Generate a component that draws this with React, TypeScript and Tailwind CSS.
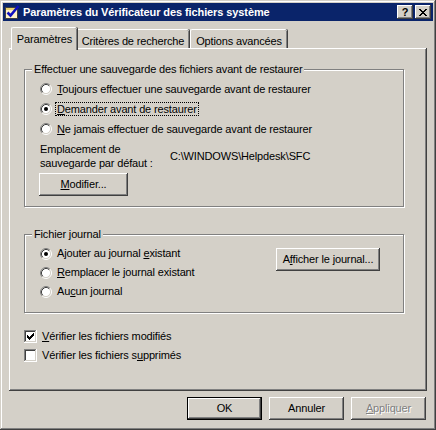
import type { ReactNode } from 'react';

const raised =
  'shadow-[inset_-1px_-1px_#404040,inset_1px_1px_#ffffff,inset_-2px_-2px_#808080,inset_2px_2px_#d4d0c8]';

const etched =
  'border border-[#808080] shadow-[inset_1px_1px_#ffffff,1px_1px_#ffffff]';

function Radio({ checked }: { checked?: boolean }) {
  return (
    <svg width="12" height="12" viewBox="0 0 12 12" className="shrink-0">
      <circle cx="6" cy="6" r="4.5" fill="#ffffff" />
      <path d="M2.11 9.89 A5.5 5.5 0 0 1 9.89 2.11" fill="none" stroke="#808080" />
      <path d="M9.89 2.11 A5.5 5.5 0 0 1 2.11 9.89" fill="none" stroke="#ffffff" />
      <path d="M2.82 9.18 A4.5 4.5 0 0 1 9.18 2.82" fill="none" stroke="#404040" />
      <path d="M9.18 2.82 A4.5 4.5 0 0 1 2.82 9.18" fill="none" stroke="#d4d0c8" />
      {checked && <circle cx="6" cy="6" r="2" fill="#000000" />}
    </svg>
  );
}

function Check({ checked }: { checked?: boolean }) {
  // pixel check mark, columns 3 px tall
  const cols: [number, number][] = [
    [3, 5], [4, 6], [5, 7], [6, 6], [7, 5], [8, 4], [9, 3],
  ];
  return (
    <svg width="13" height="13" viewBox="0 0 13 13" className="shrink-0" shapeRendering="crispEdges">
      <rect x="0" y="0" width="13" height="13" fill="#ffffff" />
      <rect x="0" y="0" width="12" height="1" fill="#808080" />
      <rect x="0" y="0" width="1" height="12" fill="#808080" />
      <rect x="1" y="1" width="10" height="1" fill="#404040" />
      <rect x="1" y="1" width="1" height="10" fill="#404040" />
      <rect x="1" y="11" width="11" height="1" fill="#d4d0c8" />
      <rect x="11" y="1" width="1" height="11" fill="#d4d0c8" />
      {checked &&
        cols.map(([x, y]) => <rect key={x} x={x} y={y} width="1" height="3" fill="#000000" />)}
    </svg>
  );
}

function RadioRow({ checked, children, h }: { checked?: boolean; children: ReactNode; h: string }) {
  return (
    <label className={'flex items-center gap-[5px] ' + h}>
      <Radio checked={checked} />
      <span>{children}</span>
    </label>
  );
}

function Btn({ children, className = '' }: { children: ReactNode; className?: string }) {
  return (
    <button type="button" className={'flex items-center justify-center bg-[#d4d0c8] ' + raised + ' ' + className}>
      {children}
    </button>
  );
}

function TitleIcon() {
  return (
    <svg width="16" height="16" viewBox="0 0 16 16" shapeRendering="crispEdges">
      <rect x="1.5" y="3.5" width="12" height="11" fill="#fff4c8" stroke="#404040" />
      <rect x="2" y="4" width="11" height="2" fill="#e8d070" />
      <path d="M3.5 8.5 L6.5 11.5 L14.5 2" fill="none" stroke="#1010c0" strokeWidth="2.6" shapeRendering="auto" />
    </svg>
  );
}

export default function App() {
  return (
    <div className="w-[436px] h-[430px] overflow-hidden bg-[#d4d0c8] p-[3px] flex flex-col font-['Liberation_Sans',Arial,sans-serif] text-[11px] tracking-[-0.15px] text-black shadow-[inset_-1px_-1px_#404040,inset_1px_1px_#d4d0c8,inset_-2px_-2px_#808080,inset_2px_2px_#ffffff]">
      {/* title bar */}
      <div className="h-[18px] bg-[#0a246a] flex items-center pl-[1px] pr-[2px]">
        <TitleIcon />
        <span className="ml-[3px] text-white font-bold text-[11px] tracking-[-0.1px] leading-none">
          Paramètres du Vérificateur des fichiers système
        </span>
        <div className="ml-auto flex gap-[2px]">
          <div className={'w-[16px] h-[14px] bg-[#d4d0c8] flex items-center justify-center font-bold text-[11px] leading-none ' + raised}>
            ?
          </div>
          <div className={'w-[16px] h-[14px] bg-[#d4d0c8] flex items-center justify-center ' + raised}>
            <svg width="8" height="7" viewBox="0 0 8 7" shapeRendering="crispEdges">
              <path d="M0 0h2v1h-2zM6 0h2v1h-2zM1 1h2v1h-2zM5 1h2v1h-2zM2 2h4v1h-4zM3 3h2v1h-2zM2 4h4v1h-4zM1 5h2v1h-2zM5 5h2v1h-2zM0 6h2v1h-2zM6 6h2v1h-2z" fill="#000" />
            </svg>
          </div>
        </div>
      </div>

      <div className="flex-1 px-[6px] pt-[6px]">
        {/* tabs */}
        <div className="flex items-start h-[21px] pl-[2px]">
          <div className="relative z-10 h-[23px] w-[66px] bg-[#d4d0c8] border-l border-t border-white rounded-tl-[2px] rounded-tr-[2px] shadow-[inset_-1px_0_#808080,1px_0_#404040] flex justify-center pt-[3px]">
            Paramètres
          </div>
          <div className="mt-[2px] h-[19px] w-[112px] bg-[#d4d0c8] border-t border-white rounded-tr-[2px] shadow-[inset_-1px_0_#808080,1px_0_#404040] flex justify-center pt-[3px]">
            Critères de recherche
          </div>
          <div className="mt-[2px] ml-[1px] h-[19px] w-[97px] bg-[#d4d0c8] border-l border-t border-white rounded-tl-[2px] rounded-tr-[2px] shadow-[inset_-1px_0_#808080,1px_0_#404040] flex justify-center pt-[3px]">
            Options avancées
          </div>
        </div>

        {/* panel */}
        <div className={'h-[343px] pt-[14px] pl-[15px] ' + raised}>
          <fieldset className={'w-[380px] ' + etched}>
            <legend className="ml-[7px] px-[2px] leading-[14px] bg-[#d4d0c8]">
              Effectuer une sauvegarde des fichiers avant de restaurer
            </legend>
            <div className="pl-[15px] pt-[3px] pb-[10px]">
              <RadioRow h="h-[20px]">
                <span className="underline">T</span>oujours effectuer une sauvegarde avant de restaurer
              </RadioRow>
              <RadioRow h="h-[20px]" checked>
                <span className="-ml-[2px] px-[1px] border border-dotted border-black leading-[13px]">
                  <span className="underline">D</span>emander avant de restaurer
                </span>
              </RadioRow>
              <RadioRow h="h-[20px]">
                <span className="underline">N</span>e jamais effectuer de sauvegarde avant de restaurer
              </RadioRow>
              <div className="mt-[3px] flex items-center leading-[14px]">
                <div className="w-[130px]">
                  Emplacement de
                  <br />
                  sauvegarde par défaut :
                </div>
                <div>C:\WINDOWS\Helpdesk\SFC</div>
              </div>
              <Btn className="mt-[3px] -ml-[1px] w-[89px] h-[23px]">
                <span>
                  <span className="underline">M</span>odifier...
                </span>
              </Btn>
            </div>
          </fieldset>

          <fieldset className={'mt-[20px] w-[380px] ' + etched}>
            <legend className="ml-[7px] px-[2px] leading-[14px] bg-[#d4d0c8]">Fichier journal</legend>
            <div className="flex items-start pl-[15px] pr-[23px] pb-[11px]">
              <div className="pt-[3px]">
                <RadioRow h="h-[19px]" checked>
                  Ajouter au journal <span className="underline">e</span>xistant
                </RadioRow>
                <RadioRow h="h-[19px]">
                  <span className="underline">R</span>emplacer le journal existant
                </RadioRow>
                <RadioRow h="h-[19px]">
                  Au<span className="underline">c</span>un journal
                </RadioRow>
              </div>
              <Btn className="ml-auto mt-[7px] w-[104px] h-[23px]">
                <span>
                  A<span className="underline">f</span>ficher le journal...
                </span>
              </Btn>
            </div>
          </fieldset>

          <div className="mt-[14px]">
            <label className="flex items-center gap-[5px] h-[19px]">
              <Check checked />
              <span>
                <span className="underline">V</span>érifier les fichiers modifiés
              </span>
            </label>
            <label className="flex items-center gap-[5px] h-[19px]">
              <Check />
              <span>
                Vérifier les fichiers s<span className="underline">u</span>pprimés
              </span>
            </label>
          </div>
        </div>

        {/* dialog buttons */}
        <div className="mt-[6px] flex justify-end gap-[7px] pr-[1px]">
          <button
            type="button"
            className={'w-[75px] h-[23px] flex items-center justify-center bg-[#d4d0c8] border border-black ' + raised}
          >
            OK
          </button>
          <Btn className="w-[75px] h-[23px]">Annuler</Btn>
          <Btn className="w-[75px] h-[23px] text-[#808080] [text-shadow:1px_1px_0_#ffffff]">
            <span>
              <span className="underline">A</span>ppliquer
            </span>
          </Btn>
        </div>
      </div>
    </div>
  );
}
